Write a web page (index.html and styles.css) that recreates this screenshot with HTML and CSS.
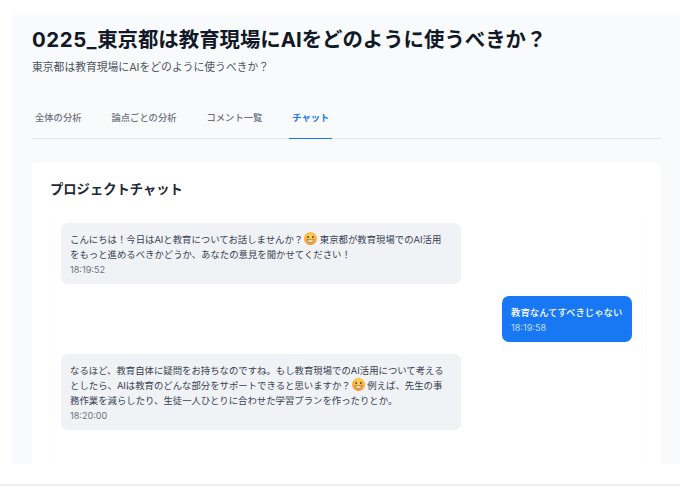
FILE: index.html
```html
<!DOCTYPE html>
<html lang="ja">
<head>
<meta charset="utf-8">
<title>プロジェクトチャット</title>
<link rel="stylesheet" href="styles.css">
</head>
<body>
<main class="shell">
  <h1 class="title"><span class="title-code">0225_</span>東京都は教育現場にAIをどのように使うべきか？</h1>
  <p class="subtitle">東京都は教育現場にAIをどのように使うべきか？</p>
  <nav class="tabs">
    <a class="tab">全体の分析</a>
    <a class="tab">論点ごとの分析</a>
    <a class="tab">コメント一覧</a>
    <a class="tab tab-active">チャット</a>
  </nav>
  <section class="card">
    <h2 class="card-title">プロジェクトチャット</h2>
    <div class="chat">
      <div class="msg msg-bot">
        <p class="msg-text">こんにちは！今日はAIと教育についてお話しませんか？<svg class="emoji" viewBox="0 0 20 20"><use href="#smile"/></svg> 東京都が教育現場でのAI活用をもっと進めるべきかどうか、あなたの意見を聞かせてください！</p>
        <time class="msg-time">18:19:52</time>
      </div>
      <div class="msg msg-user">
        <p class="msg-text">教育なんてすべきじゃない</p>
        <time class="msg-time">18:19:58</time>
      </div>
      <div class="msg msg-bot">
        <p class="msg-text">なるほど、教育自体に疑問をお持ちなのですね。もし教育現場でのAI活用について考えるとしたら、AIは教育のどんな部分をサポートできると思いますか？<svg class="emoji" viewBox="0 0 20 20"><use href="#smile"/></svg> 例えば、先生の事務作業を減らしたり、生徒一人ひとりに合わせた学習プランを作ったりとか。</p>
        <time class="msg-time">18:20:00</time>
      </div>
    </div>
  </section>
</main>
<div class="rule"></div>
<svg class="defs" width="0" height="0" aria-hidden="true">
  <defs>
    <radialGradient id="face" cx="50%" cy="35%" r="70%">
      <stop offset="0" stop-color="#ffd75e"/>
      <stop offset="0.65" stop-color="#fbb03b"/>
      <stop offset="1" stop-color="#ee8226"/>
    </radialGradient>
    <symbol id="smile" viewBox="0 0 20 20">
      <circle cx="10" cy="10" r="10" fill="url(#face)"/>
      <circle cx="6.4" cy="7.8" r="1.5" fill="#6b3d17"/>
      <circle cx="13.6" cy="7.8" r="1.5" fill="#6b3d17"/>
      <path d="M4.6 11.4c1.2 3.6 3.4 4.8 5.4 4.8s4.2-1.2 5.4-4.8c-3.4 1-7.4 1-10.8 0z" fill="#fff2d8" stroke="#8a4a1a" stroke-width="0.9" stroke-linejoin="round"/>
    </symbol>
  </defs>
</svg>
</body>
</html>
```
FILE: styles.css
```css
* { box-sizing: border-box; }
html, body { margin: 0; padding: 0; }
body {
  width: 680px;
  height: 487px;
  overflow: hidden;
  background: #fff;
  font-family: Inter, "Noto Sans CJK JP", sans-serif;
  color: #374151;
  display: flex;
  flex-direction: column;
}
.shell {
  margin: 15px 0 0 12px;
  height: 449px;
  flex: none;
  overflow: hidden;
  background: #f9fafb;
  padding: 10px 19px 0 20px;
}
.title {
  margin: 0;
  font-size: 20.4px;
  line-height: 30px;
  font-weight: 700;
  color: #111827;
}
.title-code { letter-spacing: 0.6px; }
.subtitle {
  margin: 4px 0 0;
  font-size: 10.8px;
  line-height: 17px;
  color: #4b5563;
}
.tabs {
  display: flex;
  gap: 24px;
  margin-top: 31px;
  height: 32px;
  border-bottom: 1px solid #e5e7eb;
}
.tab {
  height: 32px;
  padding: 3px 3px 0;
  font-size: 9.3px;
  line-height: 15px;
  font-weight: 500;
  color: #6b7280;
}
.tab-active {
  color: #1877f2;
  font-weight: 700;
  border-bottom: 1.5px solid #1877f2;
}
.card {
  margin-top: 23px;
  background: #fff;
  border-radius: 7px 7px 0 0;
  padding: 18px 18px 0;
  height: 320px;
}
.card-title {
  margin: 0;
  font-size: 13.3px;
  line-height: 19px;
  font-weight: 700;
  color: #1f2937;
}
.chat {
  margin-top: 14px;
  padding: 10px;
  border: 1px solid #fbfbfb;
  border-width: 0 1px;
  height: 260px;
  display: flex;
  flex-direction: column;
  gap: 12px;
}
.msg {
  padding: 9px 9px 8px;
  border-radius: 7px;
}
.msg-bot {
  width: 400px;
  padding-right: 12px;
  background: #f0f2f5;
  color: #374151;
}
.msg-user {
  align-self: flex-end;
  width: 130px;
  background: #1877f2;
  color: #fff;
  font-weight: 500;
}
.msg-text {
  margin: 0;
  font-size: 9.4px;
  line-height: 15px;
}
.msg-time {
  display: block;
  margin-top: 1px;
  font-size: 9.1px;
  line-height: 13px;
  font-weight: 400;
  color: #6b7280;
}
.msg-user .msg-time { color: #bfdbfe; }
.emoji {
  width: 13px;
  height: 13px;
  margin-left: 1px;
  vertical-align: -2px;
}
.rule {
  margin-top: 20px;
  height: 2px;
  flex: none;
  background: #efefef;
}
.defs { position: absolute; }
```
